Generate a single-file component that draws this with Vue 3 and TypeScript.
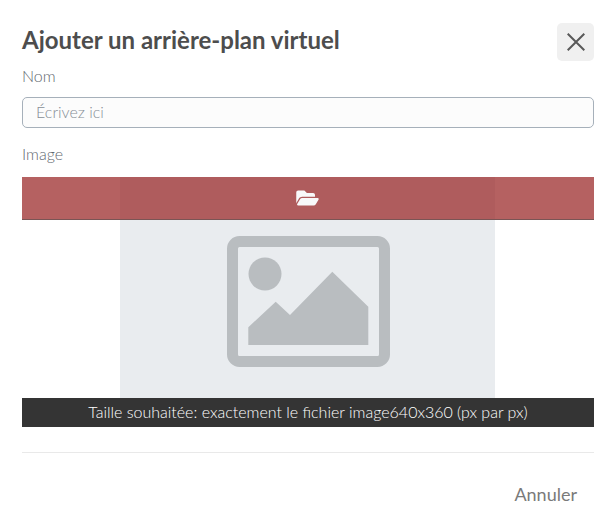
<template>
  <section class="modal">
    <header class="modal-head">
      <h2>Ajouter un arrière-plan virtuel</h2>
      <button class="close" type="button" aria-label="Fermer">
        <svg width="18" height="18" viewBox="0 0 18 18">
          <path d="M0.7 0.7L17.3 17.3M17.3 0.7L0.7 17.3" stroke="#595959" stroke-width="2" fill="none" />
        </svg>
      </button>
    </header>

    <label class="field-label" for="bg-name">Nom</label>
    <input id="bg-name" v-model="name" class="name-input" type="text" placeholder="Écrivez ici" />

    <div class="field-label image-label">Image</div>
    <div class="image-field">
      <div class="preview">
        <svg class="placeholder" width="163" height="131" viewBox="0 0 163 131">
          <rect x="5.5" y="5.5" width="152" height="120" rx="7" fill="none" stroke="#b9bdc0" stroke-width="11" />
          <circle cx="38" cy="38" r="16.5" fill="#b9bdc0" />
          <path d="M21.3 109V91.3L48.7 65.7L63 79L105.3 35.7L141.3 70.7V109Z" fill="#b9bdc0" />
        </svg>
      </div>
      <div class="upload-bar">
        <svg width="23" height="20" viewBox="0 0 576 512">
          <path
            fill="#f8f9fa"
            d="M572.694 292.093L500.27 416.248A63.997 63.997 0 0 1 444.989 448H45.025c-18.523 0-30.064-20.093-20.731-36.093l72.424-124.155A64 64 0 0 1 152 256h399.964c18.523 0 30.064 20.093 20.73 36.093zM152 224h328v-48c0-26.51-21.49-48-48-48H272l-64-64H48C21.49 64 0 85.49 0 112v278.046l69.077-118.418C86.214 242.25 117.989 224 152 224z"
          />
        </svg>
      </div>
      <div class="hint">Taille souhaitée: exactement le fichier image640x360 (px par px)</div>
    </div>

    <footer class="modal-foot">
      <button class="cancel" type="button">Annuler</button>
    </footer>
  </section>
</template>

<script setup lang="ts">
import { ref } from "vue";

const name = ref("");
</script>

<style>
html,
body {
  background: #fff;
}
</style>

<style scoped>
.modal {
  box-sizing: border-box;
  width: 616px;
  height: 528px;
  padding: 22px 22px 0;
  background: #fff;
  font-family: Lato, "Liberation Sans", sans-serif;
  overflow: hidden;
}

.modal-head {
  display: flex;
  justify-content: space-between;
  align-items: flex-start;
  height: 44px;
}

h2 {
  margin: 0;
  padding-top: 3px;
  font-size: 24px;
  line-height: 30px;
  font-weight: 700;
  color: #4d4d4d;
}

.close {
  display: flex;
  align-items: center;
  justify-content: center;
  width: 37px;
  height: 38px;
  margin-top: 1px;
  padding: 0;
  border: 0;
  border-radius: 5px;
  background: #f0f0f0;
}

.field-label {
  display: block;
  font-size: 16px;
  font-weight: 300;
  line-height: 20px;
  color: #5f686f;
}

.name-input {
  display: block;
  box-sizing: border-box;
  width: 100%;
  height: 31px;
  margin-top: 11px;
  padding: 0 13px 2px;
  border: 1px solid #a6b0ba;
  border-radius: 5px;
  background: #fcfcfc;
  font-family: inherit;
  font-size: 16px;
  font-weight: 300;
  color: #495057;
  outline: none;
}

.name-input::placeholder {
  color: #868e96;
  opacity: 1;
}

.image-label {
  margin-top: 16px;
}

.image-field {
  position: relative;
  margin-top: 13px;
}

.preview {
  box-sizing: border-box;
  width: 375px;
  height: 221px;
  margin-left: 98px;
  padding-top: 59px;
  background: #e9ecef;
}

.placeholder {
  display: block;
  margin-left: 107px;
}

.upload-bar {
  position: absolute;
  top: 0;
  left: 0;
  right: 0;
  display: flex;
  align-items: center;
  justify-content: center;
  height: 43px;
  padding-right: 2px;
  box-sizing: border-box;
  background: rgba(155, 42, 42, 0.74);
  border-bottom: 1px solid #7a5555;
}

.hint {
  height: 29px;
  background: #343434;
  color: #fff;
  font-size: 16px;
  font-weight: 300;
  line-height: 28px;
  text-align: center;
}

.modal-foot {
  display: flex;
  justify-content: flex-end;
  margin-top: 25px;
  padding-top: 29px;
  border-top: 1px solid #e9e9e9;
}

.cancel {
  padding: 0 17px 0 0;
  border: 0;
  background: none;
  font-family: inherit;
  font-size: 18px;
  font-weight: 400;
  line-height: 24px;
  color: #7a7a7a;
}
</style>
